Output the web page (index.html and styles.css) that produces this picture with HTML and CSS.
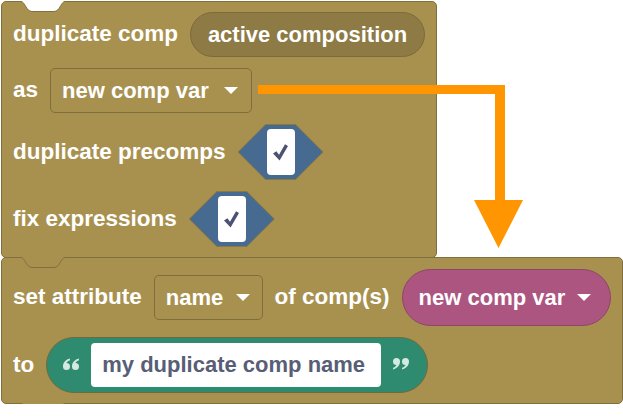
FILE: index.html
```html
<!DOCTYPE html>
<html lang="en">
<head>
  <meta charset="UTF-8">
  <title>Duplicate comp blocks</title>
  <link rel="stylesheet" href="styles.css">
</head>
<body>

<div class="canvas">
  <!-- duplicate comp -->
  <div class="block block-top">
    <svg class="notch" width="44" height="12" viewBox="0 0 44 12">
      <path class="notch-fill notch-white" d="M0 0 H44 V0.5 C40 0.5 39 10.5 33 10.5 H11 C5 10.5 4 0.5 0 0.5 Z"/>
      <path class="notch-line" d="M0 0.5 C4 0.5 5 10.5 11 10.5 H33 C39 10.5 40 0.5 44 0.5"/>
    </svg>

    <div class="row">
      <span class="label">duplicate comp</span>
      <span class="pill pill-dark">active composition</span>
    </div>
    <div class="row">
      <span class="label">as</span>
      <span class="dropdown dropdown-var">new comp var <i class="caret"></i></span>
    </div>
    <div class="row">
      <span class="label">duplicate precomps</span>
      <span class="hex"><span class="hex-inner"><span class="checkbox">
        <svg width="15" height="17" viewBox="0 0 15 17"><path d="M0 9.5 L3.4 7.2 L6 10.8 L12 0.3 L15 2 L6.6 16.5 Z"/></svg>
      </span></span></span>
    </div>
    <div class="row">
      <span class="label">fix expressions</span>
      <span class="hex"><span class="hex-inner"><span class="checkbox">
        <svg width="15" height="17" viewBox="0 0 15 17"><path d="M0 9.5 L3.4 7.2 L6 10.8 L12 0.3 L15 2 L6.6 16.5 Z"/></svg>
      </span></span></span>
    </div>
  </div>

  <!-- set attribute -->
  <div class="block block-bottom">
    <svg class="notch" width="44" height="12" viewBox="0 0 44 12">
      <path class="notch-fill" d="M0 0 H44 V0.5 C40 0.5 39 10.5 33 10.5 H11 C5 10.5 4 0.5 0 0.5 Z"/>
      <path class="notch-line" d="M0 0.5 C4 0.5 5 10.5 11 10.5 H33 C39 10.5 40 0.5 44 0.5"/>
    </svg>
    <svg class="notch tab" width="44" height="12" viewBox="0 0 44 12">
      <path class="notch-fill" d="M0 0 H44 V0.5 C40 0.5 39 10.5 33 10.5 H11 C5 10.5 4 0.5 0 0.5 Z"/>
      <path class="notch-line" d="M0 0.5 C4 0.5 5 10.5 11 10.5 H33 C39 10.5 40 0.5 44 0.5"/>
    </svg>

    <div class="row">
      <span class="label">set attribute</span>
      <span class="dropdown dropdown-name">name <i class="caret"></i></span>
      <span class="label">of comp(s)</span>
      <span class="pill pill-var">new comp var <i class="caret"></i></span>
    </div>
    <div class="row">
      <span class="label">to</span>
      <span class="pill pill-text">
        <svg class="quote" width="16" height="12" viewBox="0 0 16 12">
          <path id="qmark" d="M6.8 0.6 C3 1.6 0 4.5 0 8.5 A3.5 3.5 0 1 0 3.5 5 C4.2 3.6 5.4 2.6 7 2.2 Z"/>
          <use href="#qmark" x="9"/>
        </svg>
        <span class="text-field">my duplicate comp name</span>
        <svg class="quote" width="16" height="12" viewBox="0 0 16 12">
          <g transform="rotate(180 8 6)">
            <use href="#qmark"/>
            <use href="#qmark" x="9"/>
          </g>
        </svg>
      </span>
    </div>
  </div>

  <!-- annotation arrow -->
  <svg class="arrow" width="266" height="164" viewBox="0 0 266 164">
    <path d="M0 0 H247 V115 H265 L240.5 163 L216 115 H237 V9 H0 Z"/>
  </svg>
</div>

</body>
</html>
```

FILE: styles.css
```css
* {
  box-sizing: border-box;
}
body {
  margin: 0;
  background-color: #fff;
  font-family: "Liberation Sans", Arial, sans-serif;
}
.canvas {
  position: relative;
  padding: 1px 0 0 1px;
}

/* BLOCKS */
.block {
  position: relative;
  display: flex;
  flex-direction: column;
  gap: 11px;
  background-color: #a8914f;
  border: 1px solid #81703d;
  border-radius: 5px;
  padding: 10px 11px 10px 11px;
}
.block-top {
  width: 436px;
}
.block-bottom {
  width: 622px;
  margin-top: -1px;
  padding: 11px 11px 10px 11px;
}
.notch {
  position: absolute;
  top: -1px;
  left: 19px;
  display: block;
}
.notch.tab {
  top: 100%;
}
.notch-fill {
  fill: #a8914f;
}
.notch-white {
  fill: #fff;
}
.notch-line {
  fill: none;
  stroke: #81703d;
  stroke-width: 1;
}

.row {
  display: flex;
  align-items: center;
  gap: 12px;
}
.label {
  color: #fff;
  font-size: 22.5px;
  font-weight: bold;
  line-height: 1;
  white-space: nowrap;
}

/* INPUTS */
.pill,
.dropdown {
  display: flex;
  align-items: center;
  color: #fff;
  font-size: 22px;
  font-weight: bold;
  line-height: 1;
  white-space: nowrap;
}
.pill-dark {
  justify-content: center;
  width: 238px;
  height: 45px;
  border-radius: 23px;
  background-color: #8d7a44;
  border: 1px solid #7c6b3a;
}
.dropdown {
  justify-content: space-between;
  height: 45px;
  border: 1px solid #7f6e3c;
  border-radius: 5px;
}
.dropdown-var {
  width: 202px;
  padding: 0 13px 0 11px;
}
.dropdown-name {
  width: 111px;
  padding: 0 12px 0 11px;
}
.caret {
  width: 0;
  height: 0;
  border-left: 7px solid transparent;
  border-right: 7px solid transparent;
  border-top: 7px solid #fff;
}
.pill-var {
  justify-content: space-between;
  width: 214px;
  height: 57px;
  border-radius: 29px;
  padding: 0 19px 0 16px;
  background-color: #ad5581;
  border: 1px solid #8e4569;
}
.pill-text {
  width: 382px;
  height: 56px;
  border-radius: 28px;
  padding: 0 15px 0 16px;
  gap: 12px;
  background-color: #2f8b70;
  border: 1px solid #6e6a3e;
}
.quote {
  flex-shrink: 0;
  margin-top: -2px;
  fill: #d3eae1;
}
.text-field {
  display: flex;
  align-items: center;
  width: 290px;
  height: 44px;
  padding-left: 11px;
  background-color: #fff;
  border-radius: 4px;
  color: #575e75;
}

/* CHECKBOX HEXAGONS */
.hex {
  display: block;
  width: 86px;
  height: 56px;
  padding: 1px;
  background-color: #8a7842;
  clip-path: polygon(0 50%, 28px 0, calc(100% - 28px) 0, 100% 50%, calc(100% - 28px) 100%, 28px 100%);
}
.hex-inner {
  display: flex;
  align-items: center;
  justify-content: center;
  width: 100%;
  height: 100%;
  background-color: #476b90;
  clip-path: polygon(0 50%, 27px 0, calc(100% - 27px) 0, 100% 50%, calc(100% - 27px) 100%, 27px 100%);
}
.checkbox {
  display: flex;
  align-items: center;
  justify-content: center;
  width: 28px;
  height: 46px;
  background-color: #fff;
  border-radius: 4px;
}
.checkbox svg {
  fill: #4d5273;
}

.arrow {
  position: absolute;
  left: 258px;
  top: 85px;
  fill: #ff9500;
}
```
